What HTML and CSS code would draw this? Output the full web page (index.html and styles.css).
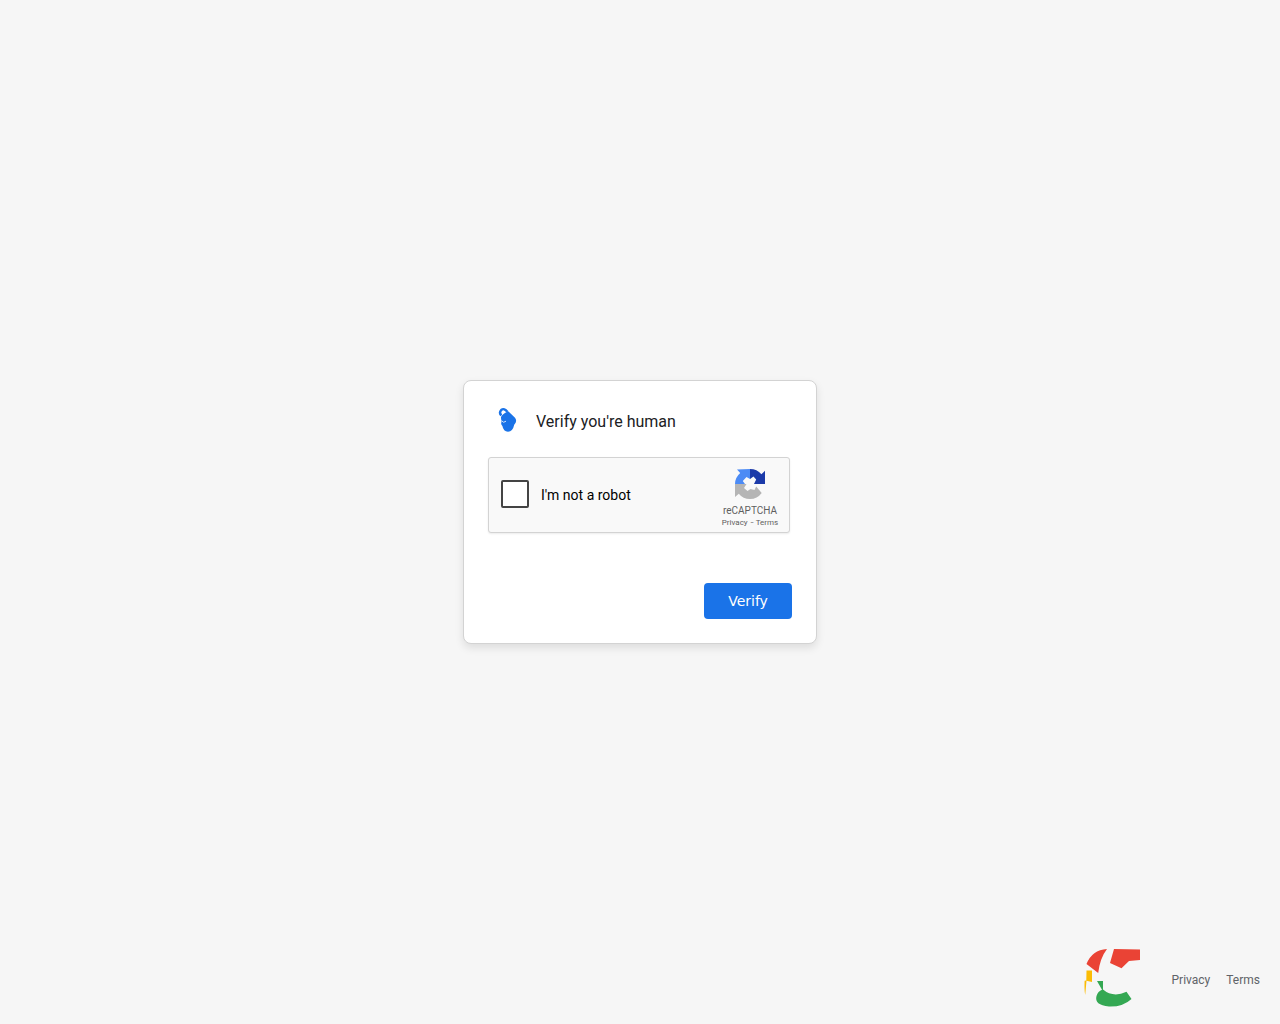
FILE: index.html
```
<!DOCTYPE html>
<html lang="en">
<head>
    <meta charset="UTF-8">
    <meta name="viewport" content="width=device-width, initial-scale=1.0">
    <title>Verify you're human</title>
    <link rel="stylesheet" href="styles.css">
</head>
<body>
    <main class="card">
        <div class="card-header">
            <svg class="card-icon" viewBox="0 0 36 36">
                <path fill="none" stroke="#1a73e8" stroke-width="2.4" d="M11.2 15.5 Q8.8 12.5 11.2 10 Q14.3 7.6 17.5 12"/>
                <path fill="#1a73e8" d="M11 18 Q10.6 15.6 13.5 13.9 Q15.5 12.3 18.5 11.6 L25 17.7 Q27.6 21.3 24.2 24.7 Q22.8 31.6 18 31.7 Q13.4 31.5 12.4 26 Q10.5 24 11.5 22Z"/>
                <path fill="none" stroke="#fff" stroke-width=".8" d="M11.5 20.7 Q13.5 23.6 16 21.2"/>
            </svg>
            <h1>Verify you're human</h1>
        </div>

        <div class="captcha">
            <span class="checkbox" role="checkbox" aria-checked="false" tabindex="0"></span>
            <span class="captcha-label">I'm not a robot</span>
            <div class="captcha-brand">
                <svg class="captcha-logo" viewBox="0 0 30 30">
                    <path fill="#1c3aa9" d="M15 0 Q22 0 26.4 5.2 L30 1.8 V15 H19 L21.2 10.6 L18.5 7.5 L15 10Z"/>
                    <path fill="#4c8bf5" d="M15 0 V10 L11.5 8 L7.8 12 L10 15 H0 Q0 8.6 5.2 4 L2 .5Z"/>
                    <path fill="#b5b5b5" d="M0 15 H11.5 L9 19 L12.5 22 L15.5 20 L19.5 21 L21.2 17.5 L26.7 24 Q22.3 30 15 30 Q8 30 3.8 24.7 L0 28Z"/>
                </svg>
                <span class="captcha-name">reCAPTCHA</span>
                <span class="captcha-links">Privacy <span class="dash">-</span> Terms</span>
            </div>
        </div>

        <button class="verify-btn" type="button">Verify</button>
    </main>

    <footer class="footer">
        <svg class="footer-logo" viewBox="0 0 75 75">
            <path fill="#ea4335" d="M11.5 24 Q17 10 32 9 Q25 18 23.2 33Z"/>
            <path fill="#ea4335" d="M39 9 L65 9.6 V20 L54 21 L46.5 28.2 L35 23Z"/>
            <path fill="#fbbc05" d="M11.5 30.5 H17 V42 L11.5 40.8 L10.2 55 Q9.2 50 9.6 40.7 L11.3 40.5Z"/>
            <path fill="#34a853" d="M22 41 H28 V49.5 Q38 58 51.5 51.8 L56.5 59 Q48 67 34 66.6 Q19 65 21.5 56 Q23 51 27 49.7Z"/>
        </svg>
        <a href="#">Privacy</a>
        <a href="#">Terms</a>
    </footer>
</body>
</html>
```
FILE: styles.css
```
* {
    box-sizing: border-box;
}
body {
    margin: 0;
    height: 100vh;
    display: grid;
    grid-template-rows: 1fr 264px 1fr;
    justify-items: center;
    background-color: #f6f6f6;
    font-family: Roboto, Arial, sans-serif;
}
.card {
    grid-row: 2;
    width: 354px;
    display: flex;
    flex-direction: column;
    padding: 21px 24px 24px;
    background: #fff;
    border: 1px solid #d3d3d3;
    border-radius: 8px;
    box-shadow: 0 4px 8px rgba(0, 0, 0, 0.1);
}
.card-header {
    display: flex;
    align-items: center;
    height: 36px;
    margin-bottom: 19px;
}
.card-icon {
    width: 36px;
    height: 36px;
    margin: -4px 10px 0 2px;
}
h1 {
    margin: 2px 0 0;
    font-size: 16px;
    font-weight: 400;
    color: #202124;
}
.captcha {
    display: flex;
    align-items: center;
    width: 302px;
    height: 76px;
    padding-left: 12px;
    background: #f9f9f9;
    border: 1px solid #d3d3d3;
    border-radius: 3px;
    box-shadow: 0 1px 2px rgba(0, 0, 0, 0.08);
}
.checkbox {
    width: 28px;
    height: 28px;
    margin: 0 12px 2px 0;
    background: #fff;
    border: 2px solid #444;
    border-radius: 2px;
}
.captcha-label {
    font-size: 14px;
    color: #000;
}
.captcha-brand {
    display: flex;
    flex-direction: column;
    align-items: center;
    align-self: flex-start;
    width: 70px;
    margin: 11px 4px 0 auto;
    color: #5f5f5f;
}
.captcha-logo {
    width: 30px;
    height: 30px;
}
.captcha-name {
    margin-top: 6px;
    font-size: 10px;
    line-height: 12px;
}
.captcha-links {
    font-size: 8px;
    line-height: 12px;
    white-space: nowrap;
}
.dash {
    display: inline-block;
    transform: scaleX(1.4);
    margin: 0 1px;
}
.verify-btn {
    align-self: flex-end;
    width: 88px;
    height: 36px;
    margin-top: auto;
    padding: 0;
    background: #1a73e8;
    color: #fff;
    border: none;
    border-radius: 4px;
    font-family: "DejaVu Sans", sans-serif;
    font-size: 14px;
    cursor: pointer;
}
.footer {
    grid-row: 3;
    align-self: end;
    justify-self: end;
    display: flex;
    align-items: center;
    gap: 16px;
    padding: 0 20px 9px 0;
    font-size: 12px;
}
.footer-logo {
    width: 75px;
    height: 75px;
    margin-right: 6px;
}
.footer a {
    margin-top: 5px;
    color: #5f6368;
    text-decoration: none;
}
```
